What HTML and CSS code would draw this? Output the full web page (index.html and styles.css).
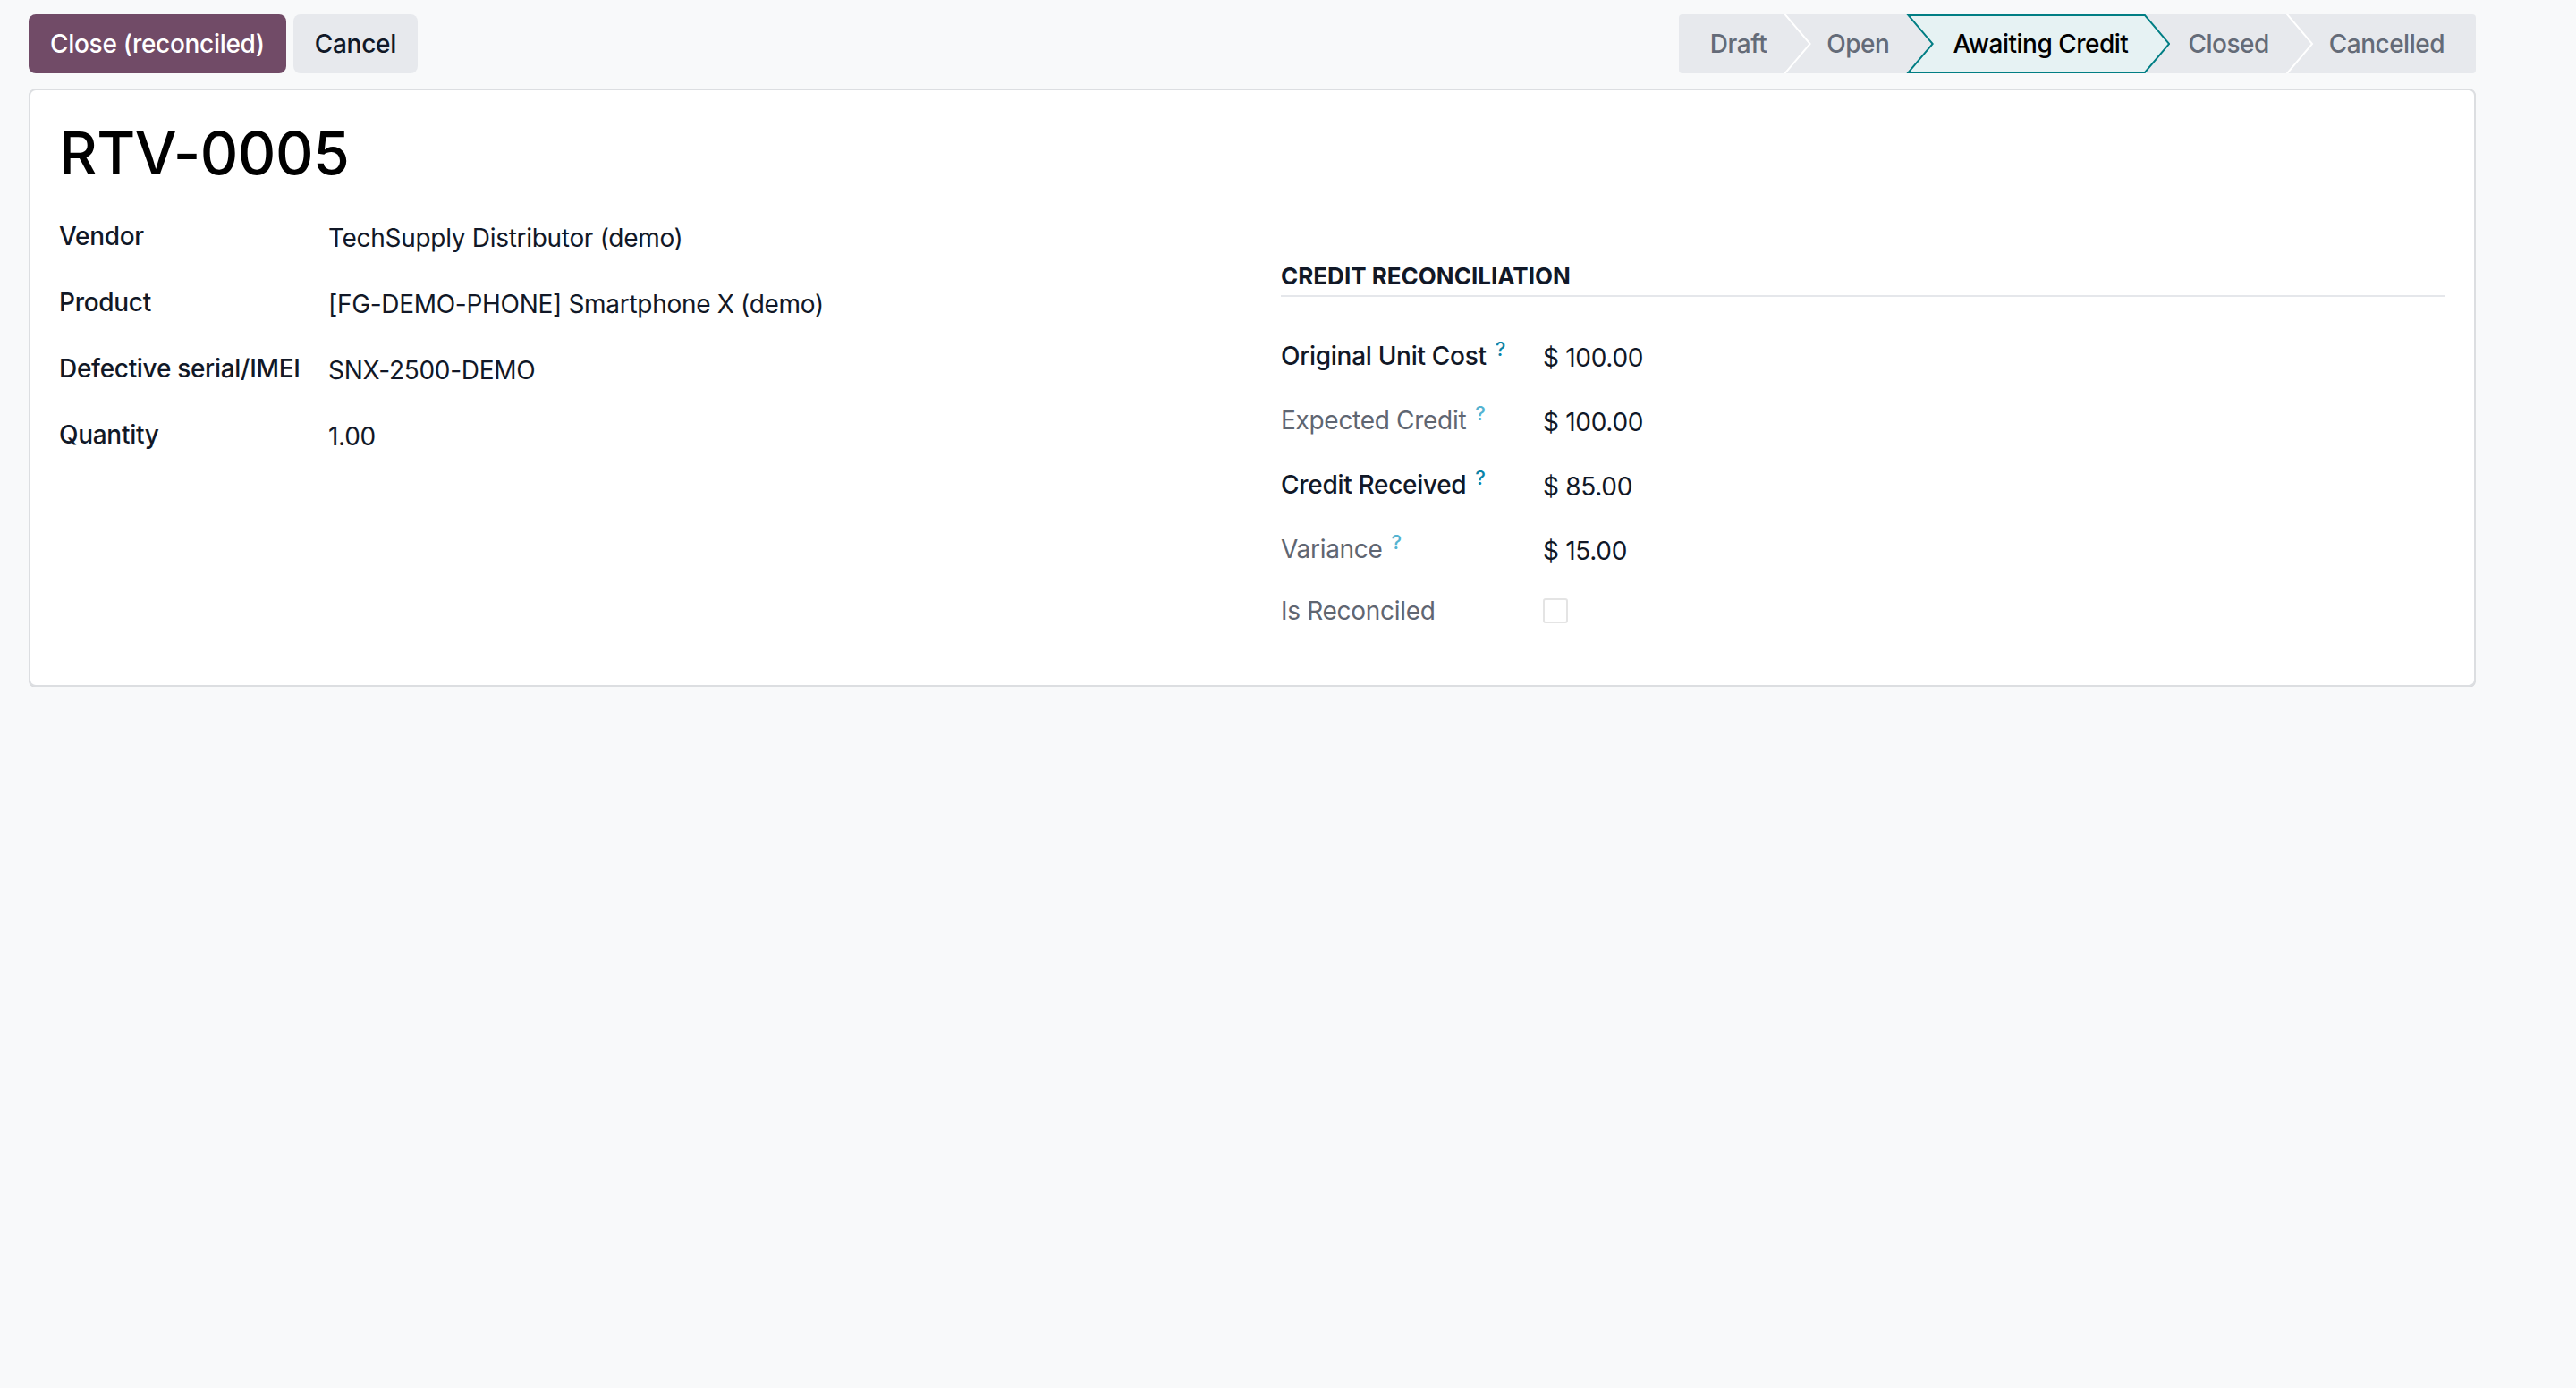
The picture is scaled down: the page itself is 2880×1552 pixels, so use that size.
FILE: index.html
```html
<!DOCTYPE html>
<html lang="en">
<head>
    <meta charset="UTF-8">
    <meta name="viewport" content="width=device-width, initial-scale=1.0">
    <title>RTV-0005</title>
    <link rel="stylesheet" href="styles.css">
</head>
<body>

    <div class="form">

        <div class="control-bar">
            <div class="actions">
                <button class="btn btn-primary">Close (reconciled)</button>
                <button class="btn btn-light">Cancel</button>
            </div>

            <div class="statusbar">
                <span class="stage sep">Draft</span>
                <span class="stage">Open</span>
                <span class="stage active"><span class="stage-text">Awaiting Credit</span></span>
                <span class="stage sep">Closed</span>
                <span class="stage last">Cancelled</span>
            </div>
        </div>

        <div class="sheet">
            <h1 class="title">RTV-0005</h1>

            <div class="groups">
                <div class="group">
                    <div class="field">
                        <span class="label">Vendor</span>
                        <span class="value">TechSupply Distributor (demo)</span>
                    </div>
                    <div class="field">
                        <span class="label">Product</span>
                        <span class="value">[FG-DEMO-PHONE] Smartphone X (demo)</span>
                    </div>
                    <div class="field">
                        <span class="label">Defective serial/IMEI</span>
                        <span class="value">SNX-2500-DEMO</span>
                    </div>
                    <div class="field">
                        <span class="label">Quantity</span>
                        <span class="value">1.00</span>
                    </div>
                </div>

                <div class="group group-right">
                    <div class="separator">Credit Reconciliation</div>

                    <div class="field">
                        <span class="label">Original Unit Cost<sup class="help">?</sup></span>
                        <span class="value">$ 100.00</span>
                    </div>
                    <div class="field">
                        <span class="label muted">Expected Credit<sup class="help">?</sup></span>
                        <span class="value">$ 100.00</span>
                    </div>
                    <div class="field">
                        <span class="label">Credit Received<sup class="help">?</sup></span>
                        <span class="value">$ 85.00</span>
                    </div>
                    <div class="field">
                        <span class="label muted">Variance<sup class="help">?</sup></span>
                        <span class="value">$ 15.00</span>
                    </div>
                    <div class="field field-last">
                        <span class="label muted">Is Reconciled</span>
                        <span class="value"><span class="checkbox"></span></span>
                    </div>
                </div>
            </div>
        </div>

    </div>

</body>
</html>
```

FILE: styles.css
```css
body {
  margin: 0;
  background-color: #f8f9fa;
  color: #111827;
  font-family: Inter, "Noto Sans", sans-serif;
  font-size: 28px;
  line-height: 40px;
  letter-spacing: -0.3px;
}

.form {
  width: 2736px;
  margin-left: 32px;
  padding-top: 16px;
}

/* control panel: buttons + status */
.control-bar {
  display: flex;
  justify-content: space-between;
  align-items: center;
  height: 66px;
}

.actions {
  display: flex;
  gap: 8px;
}

.btn {
  height: 66px;
  padding: 0 24px;
  border: none;
  border-radius: 8px;
  font-family: inherit;
  font-size: 28px;
  font-weight: 500;
  letter-spacing: -0.3px;
}

.btn-primary {
  background-color: #714b67;
  color: #fff;
}

.btn-light {
  background-color: #e7e9ed;
  color: #111827;
}

.statusbar {
  display: flex;
  height: 66px;
  background-color: #e7e9ed;
  border-radius: 4px;
}

.stage {
  position: relative;
  padding: 0 19px 0 48px;
  line-height: 66px;
  font-weight: 500;
  letter-spacing: -0.5px;
  color: #646b78;
}

.stage:first-child {
  padding-left: 35px;
}

.stage.last {
  padding-right: 35px;
}

/* white chevron between two grey stages */
.stage.sep::after {
  content: "";
  position: absolute;
  top: 0;
  bottom: 0;
  left: 100%;
  width: 31px;
  background-color: #fff;
  clip-path: polygon(0 0, 2.6px 0, 30.6px 50%, 2.6px 100%, 0 100%, 28px 50%);
  z-index: 1;
}

.stage.active {
  color: #000;
  padding-left: 52px;
  z-index: 2;
}

.stage.active::before,
.stage.active::after {
  content: "";
  position: absolute;
  top: 0;
  bottom: 0;
  left: 0;
  right: -28px;
}

.stage.active::before {
  background-color: #017e84;
  clip-path: polygon(0 0, calc(100% - 28px) 0, 100% 50%, calc(100% - 28px) 100%, 0 100%, 28px 50%);
}

.stage.active::after {
  background-color: #e6f2f3;
  clip-path: polygon(4.3px 2px, calc(100% - 28.9px) 2px, calc(100% - 2.6px) 50%, calc(100% - 28.9px) calc(100% - 2px), 4.3px calc(100% - 2px), 30.6px 50%);
}

.stage-text {
  position: relative;
  z-index: 1;
}

/* sheet */
.sheet {
  box-sizing: border-box;
  min-height: 669px;
  margin-top: 17px;
  padding: 31px 32px;
  background-color: #fff;
  border: 2px solid #dcdee1;
  border-radius: 8px;
  box-shadow: 0 1px 0 #d6d8db;
}

.title {
  margin: 0;
  font-size: 66px;
  line-height: 79px;
  font-weight: 500;
  letter-spacing: -0.5px;
  color: #000;
}

.groups {
  display: grid;
  grid-template-columns: 1fr 1fr;
  margin-top: 16px;
}

.group-right {
  padding-left: 32px;
}

.field {
  display: grid;
  grid-template-columns: 301px 1fr;
  padding: 17px 0;
}

.group-right .field {
  grid-template-columns: 293px 1fr;
  padding: 16px 0;
}

.group-right .field-last {
  padding-top: 13px;
}

.label {
  font-weight: 500;
  color: #111827;
}

.label.muted {
  font-weight: 400;
  color: #5f6672;
}

.value {
  line-height: 40px;
  transform: translateY(2px);
}

.help {
  margin-left: 10px;
  font-size: 22px;
  line-height: 0;
  font-weight: 500;
  color: #0a83a8;
}

.muted .help {
  color: #55b3d1;
}

.separator {
  margin-top: 66px;
  padding-bottom: 5px;
  margin-bottom: 30px;
  border-bottom: 2px solid #e5e7eb;
  font-size: 26px;
  line-height: 32px;
  font-weight: 700;
  letter-spacing: 0;
  text-transform: uppercase;
  color: #111827;
}

.checkbox {
  display: inline-block;
  box-sizing: border-box;
  width: 28px;
  height: 28px;
  margin-top: 4px;
  border: 2px solid #e4e4e4;
  border-radius: 3px;
  vertical-align: top;
}
```
